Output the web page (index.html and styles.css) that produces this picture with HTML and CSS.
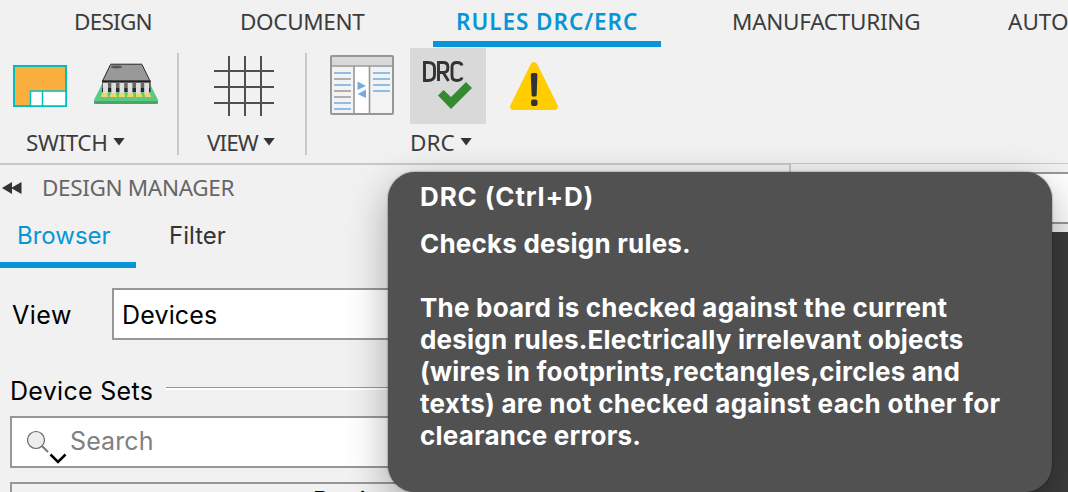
FILE: index.html
```html
<!DOCTYPE html>
<html lang="en">
<head>
<meta charset="utf-8">
<title>Rules DRC/ERC</title>
<link rel="stylesheet" href="styles.css">
</head>
<body>
<div class="app">
  <header class="ribbon">
    <nav class="tabs">
      <div class="tab tab-design"><span>DESIGN</span></div>
      <div class="tab tab-document"><span>DOCUMENT</span></div>
      <div class="tab tab-rules active"><span>RULES DRC/ERC</span></div>
      <div class="tab tab-manufacturing"><span>MANUFACTURING</span></div>
      <div class="tab tab-auto"><span>AUTO</span></div>
    </nav>
    <div class="groups">
      <section class="group switch">
        <div class="tools">
          <svg class="board" width="54" height="42" viewBox="0 0 54 42"><rect x="1" y="1" width="52" height="40" fill="#fbaf3f" stroke="#00bfbf" stroke-width="2"/><path d="M17.500 26H53V41H17.500ZM29.500 26V41" fill="#fff" stroke="#00bfbf" stroke-width="1.500"/></svg>
          <svg class="chip" width="64" height="41" viewBox="0 0 64 41"><path d="M8 21H56L64 37V40Q64 41 62 41H2Q0 41 0 40V37Z" fill="#5cc984"/><path d="M0 38H64V39.500Q64 41 62 41H2Q0 41 0 39.500Z" fill="#48a767"/><path d="M8 18H56.500V29H8Z" fill="#292929"/><path d="M8 18H56.500V25H8Z" fill="#666"/><path d="M16.500 1.500H48L56 18H8.500Z" fill="#999" stroke="#292929"/><path d="M16.500 1H48" stroke="#777"/><path d="M8 18.200H57" stroke="#111"/><ellipse cx="22.500" cy="4" rx="5.500" ry="1.400" fill="#555"/><path d="M8 30H13L14 34H7ZM17 30H22L23 34H15.500ZM25.500 30H30.500L31 34H24.500ZM34 30H39L39.500 34H33ZM42 30H47L48.500 34H42ZM50 30H55.500L57 34H51Z" fill="#fbd45e"/><path d="M9 20H14V30H9ZM17.300 20H22V30H17.300ZM25.500 20H30.200V30H25.500ZM33.700 20H38.400V30H33.700ZM42 20H46.700V30H42ZM50.200 20H55V30H50.200Z" fill="#ddd"/></svg>
        </div>
        <div class="caption cap-switch"><span>SWITCH</span><i class="caret"></i></div>
      </section>
      <section class="group view">
        <div class="tools">
          <svg width="60" height="60" viewBox="0 0 60 60"><path d="M15 0V60M31 0V60M47 0V60M0 15H60M0 31H60M0 47H60" stroke="#505050" stroke-width="2"/></svg>
        </div>
        <div class="caption cap-view"><span>VIEW</span><i class="caret"></i></div>
      </section>
      <section class="group drc">
        <div class="tools">
          <svg class="compare" width="64" height="60" viewBox="0 0 64 60"><rect x="1" y="1" width="62" height="58" rx="1" fill="#f3f3f3" stroke="#979797" stroke-width="2"/><path d="M2 2H62V10H2Z" fill="#d9d9d9"/><path d="M24 11H39.500V58H24Z" fill="#fff"/><path d="M1 11H63M24 11V59M39.500 11V59" stroke="#979797" stroke-width="1.600"/><path d="M4 18H21M4 30H21M4 48H21M4 54H21M43 18H60M43 24H60M43 30H60M43 36H60" stroke="#72ace0" stroke-width="1.600"/><path d="M4 24H21M4 36H21M4 42H21" stroke="#999" stroke-width="1.600"/><path d="M27.500 26.500L36 31L27.500 35ZM36 34.500L27.500 39L36 43Z" fill="#72ace0"/></svg>
          <div class="drc-button">
            <svg width="76" height="76" viewBox="0 0 76 76"><path d="M14.500 14.500V32.500H18Q24.500 32.500 24.500 27V20Q24.500 14.500 18 14.500ZM28.500 33V14.500H33Q37.800 14.500 37.800 18.500V20.500Q37.800 24.500 33 24.500H28.500M33.500 25L38.500 33M52 17.500Q51.300 14.500 47 14.500Q42 14.500 42 19V28Q42 32.500 47 32.500Q51.300 32.500 52 29.500" fill="none" stroke="#333" stroke-width="2.900"/><path d="M28 47.500L33.500 42L41 49L56 34L62 40L41 61Z" fill="#338a2f"/></svg>
          </div>
          <svg class="warning" width="48" height="48" viewBox="0 0 48 48"><path d="M20.800 2Q24 -2 27.200 2L47.500 43Q49 48 44 48H4Q-1 48 .5 43Z" fill="#ffcd00"/><path d="M22.500 11H26Q27.500 11 27.400 13L26.700 33Q26.600 34.500 25 34.500H23Q21.700 34.500 21.600 33L20.800 13Q20.700 11 22.500 11Z" fill="#333"/><rect x="21" y="37.500" width="6.500" height="6.500" rx="2" fill="#333"/></svg>
        </div>
        <div class="caption cap-drc"><span>DRC</span><i class="caret"></i></div>
      </section>
    </div>
  </header>
  <main class="workspace">
    <aside class="manager">
      <div class="manager-title">
        <svg width="20" height="12" viewBox="0 0 20 12"><path d="M0 6L10 0V12ZM9 6L19.500 0V12Z" fill="#333"/></svg>
        <span>DESIGN MANAGER</span>
      </div>
      <div class="subtabs"><div class="subtab selected"><span>Browser</span></div><div class="subtab"><span>Filter</span></div></div>
      <div class="view-row"><label>View</label><div class="select">Devices</div></div>
      <div class="sets-title"><span>Device Sets</span><i></i></div>
      <div class="search">
        <svg width="42" height="36" viewBox="0 0 42 36"><circle cx="10" cy="10" r="8.500" fill="#eee" stroke="#666" stroke-width="1.200"/><path d="M16 16L22 22" stroke="#777" stroke-width="2"/><path d="M24.500 24.500L32 32L39.500 24.500" fill="none" stroke="#000" stroke-width="2.500"/></svg>
        <span>Search</span>
      </div>
      <div class="table"><span>Device</span></div>
    </aside>
    <div class="canvas"><div class="command"></div><div class="dark"></div></div>
  </main>
  <div class="tooltip">
    <p class="head">DRC (Ctrl+D)</p>
    <p class="lead">Checks design rules.</p>
    <p class="copy">The board is checked against the current<br>design rules.Electrically irrelevant objects<br>(wires in footprints,rectangles,circles and<br><span class="dense">texts) are not checked against each other for</span><br>clearance errors.</p>
  </div>
</div>
</body>
</html>
```

FILE: styles.css
```css
* { box-sizing: border-box; }
body { margin: 0; width: 1068px; height: 492px; overflow: hidden; background: #f1f1f1; font-family: Inter, "Liberation Sans", sans-serif; }
.app { position: relative; width: 1068px; height: 492px; overflow: hidden; display: flex; flex-direction: column; }
svg { display: block; flex: none; }

.ribbon { height: 163px; flex: none; font: 430 22.5px/30px "Noto Sans", sans-serif; color: #3c3c3c; }
.tabs { display: flex; height: 47px; padding-left: 50px; }
.tab { flex: none; height: 47px; padding: 7px 0 0 23px; white-space: nowrap; }
.tab-design { width: 167px; padding-left: 24px; letter-spacing: -.75px; }
.tab-document { width: 216px; letter-spacing: -.35px; }
.tab-rules { width: 228px; margin-right: 48px; letter-spacing: .95px; }
.tab-manufacturing { width: 276px; letter-spacing: -.27px; }
.tab-auto { width: 200px; }
.active { color: #0696d7; border-bottom: 6px solid #0696d7; font-weight: 600; }

.groups { display: flex; height: 116px; }
.group { position: relative; padding-top: 1px; }
.group:not(:last-child)::after { content: ""; position: absolute; right: 0; top: 6px; width: 2px; height: 102px; background: #c8c8c8; }
.switch { width: 179px; }
.view { width: 128px; }
.tools { display: flex; height: 76px; align-items: center; }
.switch .tools { padding-left: 13px; gap: 27px; }
.chip { margin-top: -6px; }
.view .tools { padding-left: 35px; }
.drc .tools { padding-left: 23px; gap: 16px; }
.compare { margin-top: -2px; }
.drc-button { width: 76px; height: 76px; background: #d9d9d9; }
.warning { margin-left: 8px; }
.caption { display: flex; align-items: center; height: 30px; margin-top: 4px; white-space: nowrap; }
.cap-switch { padding-left: 26px; letter-spacing: -.4px; }
.cap-view { padding-left: 28px; letter-spacing: -1px; }
.cap-drc { padding-left: 103px; }
.caret { width: 12px; height: 8px; margin: -3px 0 0 5.5px; background: #333; clip-path: polygon(0 0, 100% 0, 50% 100%); }

.workspace { display: flex; flex: 1; min-height: 0; }
.manager { width: 791px; border-top: 2px solid #c8c8c8; border-right: 2px solid #c8c8c8; color: #000; font-size: 25px; }
.manager-title { display: flex; align-items: center; height: 46px; gap: 20px; padding-left: 2px; color: #666; font: 22.5px/30px "Noto Sans", sans-serif; letter-spacing: -.35px; }
.subtabs { display: flex; height: 57px; font-size: 24px; line-height: 30px; color: #333; }
.subtab { width: 136px; padding: 10px 0 0 17px; }
.subtab + .subtab { padding-left: 33px; }
.selected { color: #0696d7; border-bottom: 6px solid #0696d7; }
.view-row { display: flex; height: 52px; margin-top: 20px; align-items: center; letter-spacing: .15px; }
.view-row label { width: 112px; padding: 2px 0 0 12px; letter-spacing: .5px; }
.select { width: 650px; height: 52px; padding: 10px 8px; border: 2px solid #979797; background: #fff; line-height: 31px; }
.sets-title { display: flex; align-items: center; height: 32px; margin-top: 35px; padding-left: 10px; letter-spacing: .3px; }
.sets-title span { width: 156px; flex: none; white-space: nowrap; }
.sets-title i { flex: 1; height: 3px; margin-top: -6px; background: #fff; border-top: 1px solid #979797; }
.search { display: flex; height: 52px; width: 752px; margin: 9px 0 0 10px; padding: 12px 0 0 14px; border: 2px solid #979797; background: #fff; color: #808080; line-height: 22px; letter-spacing: .1px; }
.search span { margin-left: 2px; }
.table { height: 60px; width: 752px; margin: 14px 0 0 10px; border: 2px solid #979797; padding: 2px 0 0 301px; line-height: 30px; font-weight: 500; }
.canvas { flex: 1; border-top: 1px solid #c8c8c8; padding-top: 8px; }
.command { height: 52px; border: solid #979797; border-width: 2px 0; background: #fff; }
.dark { height: 260px; margin-top: 8px; background: #3c3c3c; }

.tooltip { position: absolute; left: 388px; top: 172px; width: 664px; height: 320px; padding: 9px 32px; border-radius: 27px; background: #515151; box-shadow: 0 0 2px rgba(0,0,0,.6), 0 14px 40px rgba(0,0,0,.32); color: #fff; font-weight: 700; font-size: 26px; line-height: 32px; white-space: nowrap; letter-spacing: .21px; }
.tooltip p { margin: 0; }
.tooltip .head { letter-spacing: .85px; }
.tooltip .lead { margin-top: 15px; }
.tooltip .copy { margin-top: 32px; }
.dense { letter-spacing: .28px; }
```
